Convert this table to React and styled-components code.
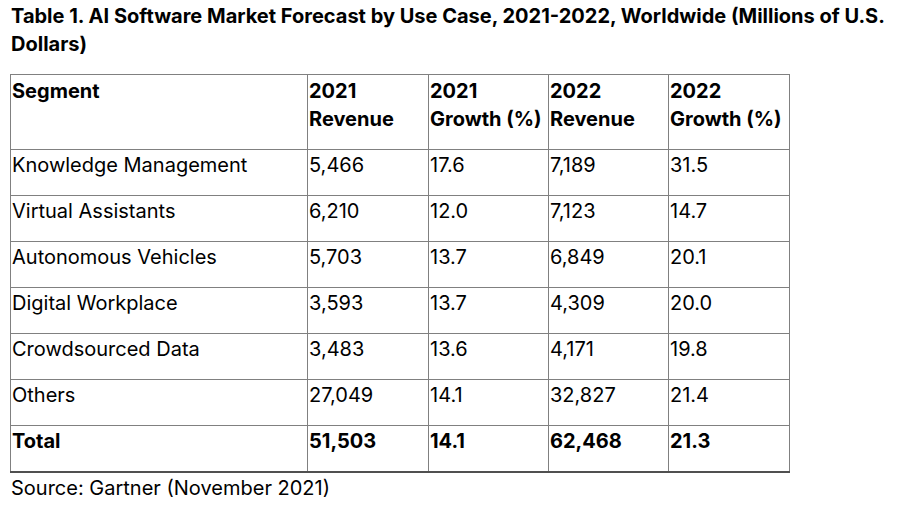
import React from "react";
import styled, { createGlobalStyle } from "styled-components";

const Global = createGlobalStyle`
  html, body { margin: 0; padding: 0; background: #fff; }
  body { font-family: Inter, "Noto Sans", Arial, sans-serif; color: #000; }
`;

const Page = styled.div`
  padding: 0 10px;
  width: 898px;
  box-sizing: border-box;
`;

const Title = styled.h2`
  margin: 0;
  padding: 2px 0 0 1px;
  font-size: 20px;
  line-height: 28px;
  font-weight: 700;
`;

const Table = styled.table`
  margin-top: 16px;
  border-collapse: collapse;
  width: 779px;
  table-layout: fixed;
  font-size: 20px;
  line-height: 28px;
`;

const Col = styled.col`
  width: ${(p) => p.$w}px;
`;

const Th = styled.th`
  border: 1px solid #808080;
  text-align: left;
  vertical-align: top;
  font-weight: 700;
  padding: 2px 1px 16px 1px;
  white-space: nowrap;
`;

const Td = styled.td`
  border: 1px solid #808080;
  vertical-align: top;
  font-weight: ${(p) => (p.$bold ? 700 : 400)};
  padding: 1px 1px 16px 1px;
  white-space: nowrap;
`;

const Tr = styled.tr`
  &:last-child td {
    border-bottom: 2px solid #505050;
  }
`;

const Source = styled.p`
  margin: 1px 0 0 1px;
  font-size: 20px;
  line-height: 28px;
`;

const rows = [
  ["Knowledge Management", "5,466", "17.6", "7,189", "31.5"],
  ["Virtual Assistants", "6,210", "12.0", "7,123", "14.7"],
  ["Autonomous Vehicles", "5,703", "13.7", "6,849", "20.1"],
  ["Digital Workplace", "3,593", "13.7", "4,309", "20.0"],
  ["Crowdsourced Data", "3,483", "13.6", "4,171", "19.8"],
  ["Others", "27,049", "14.1", "32,827", "21.4"],
];

const heads = [
  ["Segment"],
  ["2021", "Revenue"],
  ["2021", "Growth (%)"],
  ["2022", "Revenue"],
  ["2022", "Growth (%)"],
];

export default function App() {
  return (
    <Page>
      <Global />
      <Title>
        Table 1. AI Software Market Forecast by Use Case, 2021-2022, Worldwide (Millions of U.S. Dollars)
      </Title>
      <Table>
        <colgroup>
          <Col $w={297} />
          <Col $w={121} />
          <Col $w={120} />
          <Col $w={120} />
          <Col $w={121} />
        </colgroup>
        <thead>
          <tr>
            {heads.map((h, i) => (
              <Th key={i}>
                {h[0]}
                {h[1] && (
                  <>
                    <br />
                    {h[1]}
                  </>
                )}
              </Th>
            ))}
          </tr>
        </thead>
        <tbody>
          {rows.map((r) => (
            <Tr key={r[0]}>
              {r.map((c, i) => (
                <Td key={i}>{c}</Td>
              ))}
            </Tr>
          ))}
          <Tr>
            {["Total", "51,503", "14.1", "62,468", "21.3"].map((c, i) => (
              <Td key={i} $bold>
                {c}
              </Td>
            ))}
          </Tr>
        </tbody>
      </Table>
      <Source>Source: Gartner (November 2021)</Source>
    </Page>
  );
}
